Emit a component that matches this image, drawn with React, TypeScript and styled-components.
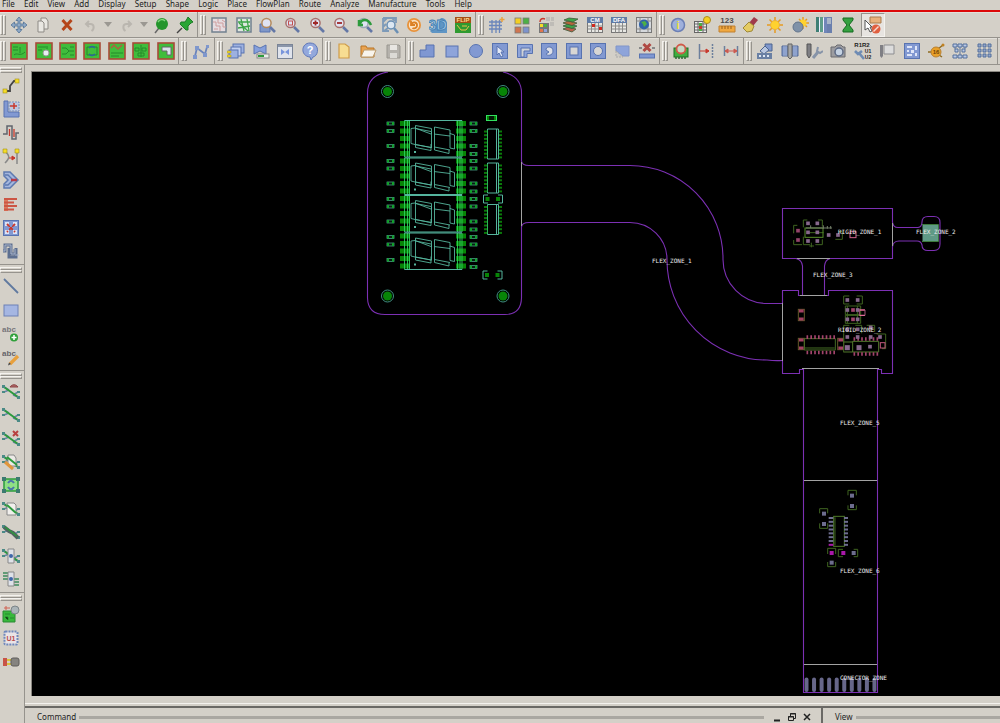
import React from "react";
import styled, { createGlobalStyle } from "styled-components";

const face = "#d4d0c8";
const dark = "#96938d";
const light = "#f4f2ee";
const uiFont = '"Noto Sans", "Open Sans", sans-serif';

const GlobalStyle = createGlobalStyle`
  * { box-sizing: border-box; }
  body { margin: 0; background: ${face}; font-family: ${uiFont}; color: #222; overflow: hidden; }
  button { font: inherit; color: inherit; }
`;

const AppFrame = styled.div`
  display: flex;
  flex-direction: column;
  min-height: 100vh;
  overflow: hidden;
`;

const MenuBar = styled.nav`
  height: 12px;
  border-bottom: 2px solid #dc0808;
`;

const MenuList = styled.div`
  display: flex;
  justify-content: space-between;
  max-width: 472px;
  padding-left: 2px;
`;

const MenuItem = styled.button`
  padding: 0;
  border: 0;
  background: none;
  font-size: 8px;
  line-height: 8px;
  white-space: nowrap;
`;

const ToolRow = styled.div`
  display: flex;
  height: 26px;
  margin-left: -2px;
  border-bottom: 1px solid ${dark};
  box-shadow: inset 0 1px 0 #e2dfd9;
  & + & { height: 27px; }
`;

const ToolGroup = styled.div<{ $width: number; $last?: boolean }>`
  display: flex;
  align-items: center;
  flex: none;
  width: ${(p) => p.$width}px;
  padding-left: 1px;
  border-right: ${(p) => (p.$last ? "0" : `1px solid ${dark}`)};
`;

const Handle = styled.span<{ $vertical?: boolean }>`
  flex: none;
  display: flex;
  flex-direction: ${(p) => (p.$vertical ? "column" : "row")};
  width: ${(p) => (p.$vertical ? "22px" : "6px")};
  height: ${(p) => (p.$vertical ? "6px" : "20px")};
  margin: ${(p) => (p.$vertical ? "2px 0 1px" : "0 1px 0 1px")};
  &::before,
  &::after {
    content: "";
    flex: 1;
    border: 1px solid;
    border-color: ${light} ${dark} ${dark} ${light};
  }
`;

const ToolButton = styled.button<{ $narrow?: boolean; $pressed?: boolean }>`
  display: flex;
  align-items: center;
  justify-content: center;
  flex: ${(p) => (p.$narrow ? 10 : 24)} 1 0;
  min-width: 0;
  min-height: 0;
  height: 24px;
  padding: 0;
  border: 1px solid transparent;
  background: none;
  ${(p) => p.$pressed && `background: #e7e4e0; border-color: ${dark} ${light} ${light} ${dark};`}
  svg { flex: none; display: block; }
`;

const Body = styled.div`
  display: flex;
  flex: 1;
`;

const SideBar = styled.aside`
  flex: none;
  width: 25px;
  border-right: 1px solid ${dark};
`;

const SideGroup = styled.div<{ $height: number; $last?: boolean }>`
  display: flex;
  flex-direction: column;
  height: ${(p) => p.$height}px;
  padding-bottom: 1px;
  border-bottom: ${(p) => (p.$last ? "0" : `1px solid ${dark}`)};
  ${ToolButton} { width: 22px; height: auto; }
`;

const Main = styled.main`
  flex: 1;
  min-width: 0;
  display: flex;
  flex-direction: column;
`;

const CanvasFrame = styled.section`
  flex: 1;
  display: flex;
  margin: 6px 0 7px 6px;
  border: 1px solid #8a8781;
  border-right: 0;
  border-bottom: 0;
  background: #000;
  svg { width: 100%; height: auto; display: block; }
`;

const DockRow = styled.div`
  display: flex;
  height: 20px;
  border-top: 1px solid ${light};
`;

const Dock = styled.section<{ $fixed?: number }>`
  display: flex;
  align-items: center;
  gap: 3px;
  flex: ${(p) => (p.$fixed ? `0 0 ${p.$fixed}px` : "1")};
  margin-top: 2px;
  padding: 3px 0 0 12px;
  border-top: 2px solid #6b6965;
  ${(p) => p.$fixed && "border-left: 2px solid #6b6965; padding-left: 12px;"}
`;

const DockTitle = styled.h2`
  margin: 0;
  font-size: 8px;
  line-height: 12px;
  font-weight: 400;
`;

const TitleRule = styled.span`
  flex: 1;
  height: 3px;
  background: #aaa7a1;
`;

const DockControls = styled.div`
  display: flex;
  gap: 3px;
  padding: 0 8px 0 4px;
`;

const DockButton = styled.button`
  width: 12px;
  height: 12px;
  padding: 0;
  border: 0;
  background: none;
  svg { display: block; }
`;

/* ---------- icons, drawn on an 18 x 18 grid ---------- */

const B = "#5873b0";
const L = "#9db1e0";
const G = "#2c9a3c";
const R = "#c8382c";
const Y = "#f5dc28";
const label = { fontFamily: '"Liberation Sans", sans-serif', fontWeight: 700, textAnchor: "middle" as const };

const board = (inner: React.ReactNode) => (
  <g fill="none" stroke="#258a2b">
    <rect x="1" y="1" width="16" height="16" fill="#40bd3c" stroke="#a84a38" strokeWidth="1.6" />
    {inner}
  </g>
);
const lens = (inner: React.ReactNode, ring = "#a8706c") => (
  <g fill="none">
    <path d="M11 11L16 16" stroke="#6377a6" strokeWidth="2.600" />
    <circle cx="7.5" cy="7" r="4.600" fill="#dfe3f2" stroke={ring} strokeWidth="1.5" />
    {inner}
  </g>
);
const tile = (inner: React.ReactNode) => (
  <g>
    <rect x="1.5" y="1.5" width="15" height="15" fill="#8299d2" stroke={B} />
    {inner}
  </g>
);
const rat = (inner?: React.ReactNode) => (
  <g fill="none">
    <path d="M2 4l5 3M2 9l5-2M11 12l5 2M11 12l5-3" stroke="#6a83a8" strokeWidth="1.5" />
    <path d="M2 4l14 10" stroke={G} strokeWidth="2" />
    <path d="M0 2h3v3H0zM0 8h3v2H0zM15 8h3v2h-3zM15 13h3v3h-3z" fill="#4a8a86" />
    {inner}
  </g>
);
const grid = (top: string, extra?: React.ReactNode) => (
  <g>
    <rect x="1.5" y="1.5" width="15" height="15" fill="#e8e8e4" stroke="#777" />
    <path d="M1.500 10h15M1.500 13h15M5.500 6v10.500M9 6v10.500M12.500 6v10.500" stroke="#8a8a88" />
    <rect x="1" y="1" width="16" height="6" fill="#5f7ba6" />
    <text x="9" y="6" fontSize="6" fill="#fff" {...label}>{top}</text>
    {extra}
  </g>
);

const icons: Record<string, React.ReactNode> = {
  Move: <path d="M9 1l3 3.500h-2V8h3.500V6L17 9l-3.500 3v-2H10v3.500h2L9 17l-3-3.500h2V10H4.500v2L1 9l3.500-3v2H8V4.500H6z" fill="#8fa9c6" stroke="#4f7196" strokeWidth=".8" />,
  Copy: <g fill="#e9e7e2" stroke="#8d8a85"><path d="M7 2h5l2 3v8H7z" /><path d="M4 5h4l2 2v9H4z" /></g>,
  Delete: <path d="M4.500 4l9 10M13.500 4l-9 10" stroke="#b5451a" strokeWidth="3" />,
  Undo: <path d="M7 5L4 8l3 3M4.500 8h4c4 0 4 5 1 7" fill="none" stroke="#bab6af" strokeWidth="2" />,
  Redo: <path d="M11 5l3 3-3 3M13.500 8h-4c-4 0-4 5-1 7" fill="none" stroke="#bab6af" strokeWidth="2" />,
  Unpin: <g><path d="M7 12l-4 5" stroke="#666" strokeWidth="1.500" /><circle cx="10" cy="8" r="6" fill="#24952c" /><path d="M6 6c2-3 5-3 7-1" stroke="#7fd67c" strokeWidth="1.500" fill="none" /></g>,
  Pin: <g><path d="M6 12l-5 5" stroke="#444" strokeWidth="1.500" /><path d="M12 1l5 5-2 1-3 3 0 4-2 0-6-6 1-2 4 0 2-3z" fill="#2aa534" stroke="#1c7c26" /></g>,
  "Unrats all": <g fill="none"><rect x="2" y="2" width="14" height="14" fill="#e5dce0" stroke="#70808f" strokeWidth="1.500" /><path d="M3 6h3v4h4v5M8 3v4h5v4h3M4 13h4M12 4l3 2" stroke="#cf9c9c" /></g>,
  "Rats all": <g fill="none"><rect x="2" y="2" width="14" height="14" fill="#dfe8e0" stroke="#70808f" strokeWidth="1.500" /><path d="M3 6h12M6 3l3 12M3 12l12-2M12 3l2 12M4 7l9 8" stroke="#3da548" strokeWidth="1.300" /></g>,
  "Zoom window": <g><path d="M1 8h10v8H1z" fill="#7f97c8" stroke={B} />{lens(null, "#b58a5c")}</g>,
  "Zoom box": lens(<rect x="5.500" y="5" width="4" height="4" stroke="#c25050" />),
  "Zoom in": lens(<path d="M5 7h5M7.500 4.500v5" stroke="#a02828" strokeWidth="1.800" />),
  "Zoom out": lens(<path d="M5 7h5" stroke="#a02828" strokeWidth="1.800" />),
  "Zoom previous": lens(<path d="M4 8c1-5 8-6 11 1M3 4v5h4" stroke={G} strokeWidth="2.500" />, "#9caab4"),
  "Zoom fit": <g fill="none"><path d="M2 2h13v5M2 2v13h6M2 6l4-4M2 11l3-3M11 2l3 3M3 15l4-3" stroke="#7d9ab8" strokeWidth="1.800" /><circle cx="10" cy="9" r="4" fill="#dce7f2" stroke="#6a8fb4" strokeWidth="1.500" /><path d="M13 12l4 5" stroke="#6a8fb4" strokeWidth="2.500" /></g>,
  Refresh: <g><circle cx="9" cy="9" r="7" fill="#e8923a" /><circle cx="9" cy="9" r="5.200" fill="#f9e2c4" /><path d="M6 5v4h4M6.500 9c1-4 6-3 5.500 1-.5 2-3 3-4.500 2" fill="none" stroke="#dc8024" strokeWidth="1.800" /></g>,
  "3D view": <g><path d="M12 2c5 0 7 3 6 15H3l-2-2z" fill="#5f95c4" /><text x="8.500" y="14" fontSize="15" fill="#9cc3e2" stroke="#3f7cb0" strokeWidth=".8" {...label}>3D</text></g>,
  Flip: <g><rect x="1" y="1" width="16" height="16" fill="#2f9a30" /><rect x="1" y="1" width="16" height="6" fill="#a55014" /><text x="9" y="6" fontSize="6" fill="#ffd890" {...label}>FLIP</text><path d="M3 9l4 5h5l3-4M8 10h5" stroke="#e9c14c" fill="none" /></g>,
  "Grid toggle": <g fill="none"><path d="M1 6h13M1 9.500h13M1 13h13M4 4v13M8 4v13M11.500 4v13" stroke="#6b86bb" strokeWidth="1.300" /><path d="M14 1v5M11.500 3.500h5" stroke="#e9a240" strokeWidth="1.500" /></g>,
  "Color dialog": <g stroke="#7a7a78" strokeWidth=".8"><rect x="2" y="2" width="6" height="6" fill="#f3cf23" /><rect x="10" y="2" width="6" height="6" fill="#4caf45" /><rect x="2" y="11" width="6" height="6" fill="#cf7550" /><rect x="10" y="11" width="6" height="6" fill="#7d93cc" /></g>,
  "Color priority": <g><path d="M9 1h4v4H9zM14 1h3v4h-3zM13 6h4v4h-4z" fill="#bfbcb7" /><rect x="2" y="7" width="10" height="10" fill="#777" /><path d="M3 8h3v3H3z" fill={Y} /><path d="M7 8h3v3H7z" fill="#4caf45" /><path d="M3 13h3v3H3z" fill="#df7550" /><path d="M7 13h3v3H7z" fill="#90a3da" /><path d="M3 6c0-3 2-4 5-3" stroke={R} strokeWidth="1.500" fill="none" /></g>,
  Layers: <g stroke="#3c5a38" strokeWidth=".8"><path d="M2 13l5-2 8 2-4 3z" fill="#b9604a" /><path d="M2 10l5-2 9 2-5 2.500z" fill="#3da548" /><path d="M2 7l5-2 9 2-5 2.500z" fill="#b7663c" /><path d="M3 4l5-2 9 1-5 3z" fill="#3da548" /></g>,
  "Constraint manager": grid("CM", <path d="M6 8h3v3H6zM13 11h3v3h-3z" fill="#d02a20" />),
  "Constraint columns": grid("DFA"),
  "Net globe": <g><rect x="1.500" y="1.500" width="15" height="15" fill="#d5d8dc" stroke="#777" /><path d="M1.500 5h15M1.500 13h15M5 1.500v15M13 1.500v15" stroke="#8a8a88" /><circle cx="9" cy="8.500" r="5" fill="#2f62a8" /><path d="M6 6l4-1 2 3-3 3-1-3z" fill="#4caf45" /></g>,
  Info: <g><circle cx="9" cy="9" r="6.500" fill="#9fb0dc" stroke="#6b7fb5" strokeWidth="1.500" /><text x="9" y="13" fontSize="11" fill="#f3e13a" {...label}>i</text></g>,
  "Property list": <g><rect x="1.500" y="5.500" width="12" height="11" fill="#eee" stroke="#666" /><path d="M1.500 8h12M1.500 11h12M1.500 14h12M5 5v11M10 5v11" stroke="#666" /><path d="M6 7h3v8H6z" fill="#4caf45" /><path d="M6 10h3v3H6z" fill={R} /><circle cx="14" cy="4" r="3.500" fill="#f3cf23" stroke="#ad8a1c" /></g>,
  Measure: <g><text x="9" y="7" fontSize="8" fill="#4b4b4b" {...label}>123</text><path d="M1 10h16v6H1z" fill="#f0a840" stroke="#c08030" /><path d="M4 10v3M7 10v3M10 10v3M13 10v3" stroke="#9c6018" /></g>,
  Highlight: <g><path d="M12 1l4 3-5 6-4-3z" fill="#a03a4c" /><path d="M7 6l5 4-2 5-5 1-4-4z" fill="#e4cb62" stroke="#9f8836" /></g>,
  "Sun on": <g><path d="M9 1v16M1 9h16M3.500 3.500l11 11M14.500 3.500l-11 11" stroke="#e69a20" strokeWidth="1.500" /><circle cx="9" cy="9" r="4.500" fill="#ffd22e" stroke="#e9b040" /></g>,
  "Shadow mode": <g><path d="M12 1v12M6 7h12M8 3l8 8M16 3l-8 8" stroke="#e69a20" strokeWidth="1.500" /><circle cx="12" cy="7" r="3.500" fill="#ffd22e" /><circle cx="7" cy="11" r="5" fill="#7f91a8" stroke="#62748c" /></g>,
  "Layer stripes": <g><path d="M1 1h3v15H1z" fill="#3e7f74" /><path d="M5 1h3v15H5z" fill="#5e9d8a" /><path d="M9 1h3v16H9z" fill="#7186b8" /><path d="M12 1h5v16h-5z" fill="#6a7fae" /><path d="M4.500 2v14M8.500 2v14" stroke="#eef" /><path d="M12 2h4v6h-4z" fill="#a9b5c8" /></g>,
  Hourglass: <path d="M4 2h10v2l-4 5 4 5v2H4v-2l4-5-4-5z" fill="#35a040" stroke="#156a20" />,
  "Pick exclusion": <g><path d="M6 1h11v6H6z" fill="#e8b27c" stroke="#a97c4e" /><circle cx="12" cy="13" r="4.500" fill="#e06040" /><path d="M9.500 15.500l5-5" stroke="#f8d8d0" strokeWidth="1.500" /><path d="M1 4v10l3-2 2 4 2-1-2-4h2z" fill="#fff" stroke="#555" /></g>,
  "Board etch": board(<path d="M3 5h5M3 8h5M10 5v6M4 13c3-3 6 2 11-3" />),
  "Board via": board(<g><path d="M3 5h8M3 8h4M12 4v3" /><circle cx="11" cy="11" r="3" fill="#e8eef0" stroke="#999" /></g>),
  "Board routes": board(<path d="M3 6h4l3 3h5M3 12h4l3-3M11 5h4M11 13h4" />),
  "Board swap": board(<g><path d="M4 5h10v8H4z" /><path d="M6 6c2-2 4-2 6 0M6 12c2 2 4 2 6 0" stroke="#2f62a0" strokeWidth="1.500" /></g>),
  "Board signal": board(<g><path d="M3 6l3-3 4 4 4-4" stroke="#b06040" strokeWidth="1.500" /><path d="M3 11h12M3 14h8" /></g>),
  "Board parts": board(<path d="M3 6h4v3H3zM10 6h4v3h-4zM6 11h6v3H6zM9 3v12" />),
  "Board shape": board(<path d="M5 5h9v8h-4V9H5z" fill="#dce2ec" stroke="#666" />),
  Netlist: <g><path d="M3 14L5 6l8 6 2-7" fill="none" stroke="#6a84bc" strokeWidth="1.800" /><path d="M1 13h4v4H1zM3 4h4v4H3zM11 11h4v4h-4zM14 3h3v3h-3z" fill="#7f97cc" /></g>,
  "Window stack": <g stroke={B}><rect x="6" y="2" width="11" height="9" fill={L} /><rect x="4" y="5" width="10" height="9" fill="#c3d0f0" /><rect x="2" y="8" width="9" height="8" fill={L} /><path d="M0 9h4v2H0zM0 13h4v2H0z" fill={Y} stroke="#a08818" strokeWidth=".5" /></g>,
  "Link windows": <g><path d="M2 3l6 3 6-3v9l-6-3-6 3z" fill="#86a0dc" stroke={B} /><rect x="5" y="12" width="12" height="4" fill="#e8eee8" stroke="#888" /><path d="M6 14h6" stroke={G} strokeWidth="2" /></g>,
  "Window link": <g><rect x="1.500" y="2.500" width="15" height="14" fill="#dfe3ec" stroke="#7a8496" /><path d="M2 3h14v2H2z" fill="#8b96aa" /><path d="M5 7l4 3 4-3v6l-4-3-4 3z" fill="#7895dc" /></g>,
  Help: <g><path d="M9 1c10 0 9 13 3 14l-2 3-1-3C-1 14 0 1 9 1z" fill="#93a8dc" stroke="#5f78b8" /><text x="9" y="12" fontSize="11" fill="#fff" {...label}>?</text></g>,
  New: <path d="M4 2h6l4 3v11H4z" fill="#f7dd92" stroke="#cf9c48" strokeWidth="1.200" />,
  Open: <g><path d="M2 4h5l1 2h7v9H2z" fill="#eaa350" stroke="#b97524" /><path d="M5 8h12l-3 7H2z" fill="#f8f4ec" stroke="#b9996a" /></g>,
  Save: <g><path d="M3 3h12l1 1v12H3z" fill="#b5b2ac" stroke="#99968f" /><path d="M6 3h7v5H6z" fill="#e8e6e2" /><path d="M6 11h7v5H6z" fill="#dcdad5" /></g>,
  "Add polygon": <path d="M2 8h6V3h8v12H2z" fill="#7f97d2" stroke={B} />,
  "Add rectangle": <rect x="3" y="4" width="12" height="11" fill="#8ea4da" stroke={B} />,
  "Add circle": <circle cx="9" cy="9" r="6.500" fill="#8299d2" stroke={B} />,
  "Select shape": tile(<path d="M6 4v9l2-2 2 4 2-1-2-4h3z" fill="#e4e9f6" stroke={B} />),
  "Void polygon": <g><path d="M1.500 2.500h15v9H11v4H1.500z" fill="#8ea4da" stroke={B} /><path d="M5 15V6h9v3H8v6z" fill="#cfd2d8" stroke={B} /></g>,
  "Void ring": tile(<path d="M6 7c1-3 7-3 7 2s-6 5-7 3l3-2-3-2z" fill="#dcdfe8" stroke={B} />),
  "Void rectangle": tile(<rect x="5" y="5" width="8" height="8" fill="#d8d6d4" stroke={B} />),
  "Void circle": tile(<circle cx="9" cy="9" r="4.500" fill="#d8d6d4" stroke={B} />),
  "Edit void": <g><path d="M3 4h13v10h-6L3 9z" fill="#8ea4da" stroke="#8095c8" /><path d="M3 9v6h7z" fill="#cdcac4" stroke="#aaa" strokeDasharray="2 1" /></g>,
  "Delete island": <g><path d="M5.500 2l7 7M12.500 2l-7 7" stroke="#b04a44" strokeWidth="3" /><path d="M1 6h3M14 6h3" stroke="#888" strokeWidth="2" /><rect x="1.500" y="12" width="15" height="4" fill="#7f97d2" stroke={B} /></g>,
  "Board probe": <g><rect x="2" y="6" width="14" height="9" fill="#3fae40" stroke="#1f6f25" /><path d="M3 16h12" stroke="#2c6a30" strokeDasharray="2 1" strokeWidth="1.500" /><circle cx="9" cy="7" r="4.500" fill="#c9d8c4" stroke="#d05848" strokeWidth="1.800" /></g>,
  "Dimension edge": <g><path d="M2.500 2v15" stroke="#6c7f9c" strokeWidth="1.500" /><path d="M15.500 2v15" stroke="#6c7f9c" strokeDasharray="2 1" strokeWidth="1.500" /><path d="M3 9h9M9 7l3 2-3 2z" stroke={R} fill={R} /></g>,
  "Dimension span": <g><path d="M2.500 4v10M15.500 4v10" stroke="#6c7f9c" strokeWidth="1.500" /><path d="M3 9h12M6 7L3 9l3 2zM12 7l3 2-3 2z" stroke="#cc5a50" fill="#cc5a50" /></g>,
  "Place part": <g><path d="M9 2h7v7h-6z" fill="#7f97cc" stroke="#4d648f" /><path d="M4 9l5-5 4 4-5 4z" fill="#b9c7e0" stroke="#4d648f" /><rect x="1" y="11" width="15" height="6" fill="#6a80a4" /><path d="M3 13h2v2H3zM7 13h2v2H7zM11 13h2v2h-2z" fill="#dde6f2" /></g>,
  "Mirror part": <g><path d="M1 4h6v10H1zM11 4h6v10h-6z" fill="#7f95c4" stroke="#546a98" /><path d="M3 4v10M5 4v10M13 4v10M15 4v10" stroke="#9fb0d6" /><path d="M7 2h4v13l-2 2-2-2z" fill="#a7a7a5" stroke="#666" /></g>,
  "Part wrench": <g><path d="M2 2h4v11l-2 3-2-3z" fill="#7f7f84" stroke="#555" /><path d="M8 16l5-6" stroke="#8794a8" strokeWidth="3" /><path d="M13 5l-1 4 3 2 3-2" fill="none" stroke="#8794a8" strokeWidth="2" /></g>,
  Snapshot: <g><path d="M2 5h4l2-2h4l2 2h2v10H2z" fill="#9c9ca0" stroke="#6a6a6e" /><circle cx="10" cy="10" r="4" fill="#c5d2e2" stroke="#5d6a84" strokeWidth="1.500" /></g>,
  "Rename refdes": <g><text x="8" y="5" fontSize="6" fill="#222" {...label}>R1R2</text><text x="14" y="11" fontSize="5" fill="#222" {...label}>U1</text><text x="14" y="17" fontSize="5" fill="#222" {...label}>U2</text><path d="M1 9l3 3 4-3M5 11l5 6" fill="none" stroke="#6f8cb4" strokeWidth="2.600" /></g>,
  "Part note": <g><path d="M2 3h3v11l-1.500 2L2 14z" fill="#7f7f84" /><path d="M6 3h10v9H6z" fill="#dcdcdc" stroke="#8d8d90" /></g>,
  "Pin map": tile(<path d="M4 4h5v2H4zM12 4h2v4h-2zM4 8h2v2H4zM8 8h3v3H8zM4 12h5v2H4zM12 11h2v3h-2z" fill="#dfe6f8" />),
  "Net probe": <g><path d="M1 10h7M11 7l5-4M12 13l3 2" stroke="#8f6b20" strokeWidth="1.500" /><circle cx="9" cy="10" r="5" fill="#e9a028" stroke="#b88030" /><circle cx="16" cy="3" r="1.500" fill="#c08020" /><text x="9" y="12" fontSize="6" fill="#6f4508" {...label}>16</text></g>,
  "Pad array": <path d="M2 2h4v3H2zM7 2h4v3H7zM12 2h4v3h-4zM4 7h3v3H4zM11 7h3v3h-3zM2 13h4v3H2zM7 13h4v3H7zM12 13h4v3h-4zM9 5v8M4 5v2M14 5v2" fill="#b9c8e6" stroke="#54709c" />,
  "Pad grid": <path d="M2 2h3v3H2zM7 2h3v3H7zM12 2h3v3h-3zM2 7h3v3H2zM7 7h3v3H7zM12 7h3v3h-3zM2 12h3v3H2zM7 12h3v3H7zM12 12h3v3h-3z" fill="#93a6cc" stroke="#54709c" />,
  "Add connect": <g><path d="M4 14h4V9l4-5h3" fill="none" stroke="#444" strokeWidth="1.800" /><rect x="1" y="12" width="4" height="4" fill={Y} stroke="#a09018" strokeWidth=".6" /><rect x="13" y="2" width="4" height="4" fill={Y} stroke="#a09018" strokeWidth=".6" /></g>,
  Slide: <g><path d="M2 1h4v11h11v5H2z" fill="#8299d2" stroke={B} /><path d="M7 2h10v9H7z" fill="#bcc8e0" stroke="#7b90bc" strokeDasharray="2 1" /><path d="M8 6h7M12 3v6" stroke={R} strokeWidth="1.500" /></g>,
  "Delay tune": <g fill="none"><path d="M1 10h4V2h5v13h4V9h3" stroke="#60646c" strokeWidth="1.500" /><path d="M7.500 12V5M12 5v8" stroke={R} strokeWidth="1.300" /></g>,
  "Custom smooth": <g><path d="M3 3c5 5 5 7 0 12M15 3v13" fill="none" stroke="#888" strokeWidth="1.500" /><path d="M7 10h6M10 8l3 2-3 2z" stroke={R} fill={R} /><path d="M1 1h4v4H1zM13 1h4v4h-4z" fill={Y} stroke="#a09018" strokeWidth=".6" /></g>,
  Vertex: <g><path d="M2 1h6l8 8-8 8H2v-4l4-4-4-4z" fill="#a4b6dd" stroke="#5d79b0" strokeWidth="1.500" /><path d="M3 4h3l5 5-5 5H3" fill="none" stroke="#5d79b0" strokeWidth="1.300" /><path d="M9 9h6" stroke="#b83a48" strokeWidth="2.500" /></g>,
  "Auto route": <g><path d="M2 3h4v13H2z" fill="#dc7c60" /><path d="M2 4h13M2 7.500h10M2 11h13M2 14.500h10" stroke="#cc5644" strokeWidth="2.200" /></g>,
  Fanout: tile(<g><path d="M4 4l10 10M14 4L4 14" stroke={R} /><path d="M3 3h4v4H3zM11 3h4v4h-4zM3 11h4v4H3zM11 11h4v4h-4z" fill="#dce3f6" /><path d="M5 5l8 8M13 5l-8 8" stroke={R} strokeDasharray="3 2" strokeWidth="2" /></g>),
  Meander: <g fill="none"><path d="M1 9h2V3h6v9h4V7" stroke="#5d6f90" strokeWidth="3" /><path d="M7 6v9h7V6" stroke="#5d6f90" strokeWidth="3" /><path d="M1 9h2V3h6v9h4V7M13 13h4" stroke="#aab6cc" strokeWidth="1" /></g>,
  "Add line": <path d="M2 2l14 14" stroke="#60799f" strokeWidth="1.800" />,
  "Add filled rectangle": <rect x="2" y="4" width="14" height="11" fill="#a5b6e2" stroke="#6c80b5" />,
  "Add text": <g><text x="7" y="8" fontSize="8" fill="#77757a" {...label}>abc</text><circle cx="12" cy="13.500" r="4" fill="#2fa03a" /><path d="M9.500 13.500h5M12 11v5" stroke="#fff" strokeWidth="1.500" /></g>,
  "Edit text": <g><text x="7" y="8" fontSize="8" fill="#66646a" {...label}>abc</text><path d="M8 16l8-8" stroke="#e8a03c" strokeWidth="3.200" /><path d="M6 17.500l1-3 2 1.500z" fill="#444" /></g>,
  "Net schedule": rat(<path d="M8 4c2-3 6-3 8 0z" fill="#b06868" stroke="#8d4444" />),
  "Net logic": rat(),
  "Delete net": rat(<path d="M11 1l5 5M16 1l-5 5" stroke="#b84040" strokeWidth="2" />),
  "Edit net": rat(<g><path d="M6 2h6l2 3v8H6z" fill="#eceae6" stroke="#888" /><path d="M5 4l10 8" stroke={G} strokeWidth="2" /><path d="M3 9l8 7" stroke="#e0963c" strokeWidth="3" /></g>),
  "Swap nets": <g><path d="M2 3h14v12H2z" fill="#8fe084" stroke={G} strokeWidth="1.500" /><path d="M0 1h4v4H0zM14 1h4v4h-4zM0 13h4v4H0zM14 13h4v4h-4z" fill="#3c7a70" /><path d="M6 7c2-3 4-3 6 0M6 11c2 3 4 3 6 0" fill="none" stroke="#4c74ac" strokeWidth="2" /></g>,
  "Net document": <g>{rat()}<path d="M5 3h7l2 2v10H5z" fill="#f1efec" stroke="#888" /><path d="M5 5l9 8" stroke={G} strokeWidth="2" /></g>,
  "Net thick": rat(<g><path d="M2 4l5 4 4 2 5 5" stroke="#4f6460" strokeWidth="4" /><path d="M3 4l12 9" stroke={G} strokeWidth="1.500" /></g>),
  "Net device": <g>{rat()}<path d="M6 2h6v14H6z" fill="#dfe2e8" stroke="#888" /><circle cx="9" cy="9" r="2" fill="#3f66a8" /></g>,
  "Net bus": <g><path d="M1 3h5M1 6h5M1 9h5M12 9h5M12 12h5M12 15h5" stroke="#3c8a5c" strokeWidth="1.600" /><path d="M6 2h6v14H6z" fill="#dfe2e8" stroke="#888" /><circle cx="9" cy="9" r="2" fill="#3f66a8" /></g>,
  "Place manual": <g><path d="M1 6h12v11H1z" fill="#38b83c" stroke="#2a8a32" /><path d="M3 9h5M3 12h3v3M8 13h4" stroke="#248a2c" /><circle cx="13" cy="5" r="4" fill="#aab4b8" stroke="#7b8488" /><path d="M2 3h6M4 1v4" stroke="#d06050" /></g>,
  "Place component": <g><rect x="2.500" y="2.500" width="13" height="13" rx="1" fill="#e9e3e6" stroke="#6f88bc" strokeWidth="2" strokeDasharray="2 1" /><text x="9" y="12" fontSize="7" fill="#b84a4a" {...label}>U1</text></g>,
  Connector: <g><path d="M1 5h4v8H1z" fill="#c85448" /><path d="M5 7h4M5 11h4" stroke="#d8c240" strokeWidth="2" /><rect x="9" y="5" width="8" height="8" rx="2" fill="#85837f" stroke="#5f5d5a" /></g>,
};

type ToolName = string;

function Tool({ name, pressed }: { name: ToolName; pressed?: boolean }) {
  if (name.endsWith("options")) {
    return (
      <ToolButton $narrow aria-label={name}>
        <svg width="8" height="5" viewBox="0 0 8 5"><path d="M0 0h8L4 5z" fill="#9b9892" /></svg>
      </ToolButton>
    );
  }
  return (
    <ToolButton $pressed={pressed} aria-label={name}>
      <svg width="18" height="18" viewBox="0 0 18 18">{icons[name]}</svg>
    </ToolButton>
  );
}

const menus = ["File", "Edit", "View", "Add", "Display", "Setup", "Shape", "Logic", "Place", "FlowPlan", "Route", "Analyze", "Manufacture", "Tools", "Help"];

const rows: { width: number; tools: ToolName[] }[][] = [
  [
    { width: 200, tools: ["Move", "Copy", "Delete", "Undo", "Undo options", "Redo", "Redo options", "Unpin", "Pin"] },
    { width: 278, tools: ["Unrats all", "Rats all", "Zoom window", "Zoom box", "Zoom in", "Zoom out", "Zoom previous", "Zoom fit", "Refresh", "3D view", "Flip"] },
    { width: 181, tools: ["Grid toggle", "Color dialog", "Color priority", "Layers", "Constraint manager", "Constraint columns", "Net globe"] },
    { width: 228, tools: ["Info", "Property list", "Measure", "Highlight", "Sun on", "Shadow mode", "Layer stripes", "Hourglass", "Pick exclusion"] },
  ],
  [
    { width: 181, tools: ["Board etch", "Board via", "Board routes", "Board swap", "Board signal", "Board parts", "Board shape"] },
    { width: 36, tools: ["Netlist"] },
    { width: 108, tools: ["Window stack", "Link windows", "Window link", "Help"] },
    { width: 83, tools: ["New", "Open", "Save"] },
    { width: 254, tools: ["Add polygon", "Add rectangle", "Add circle", "Select shape", "Void polygon", "Void ring", "Void rectangle", "Void circle", "Edit void", "Delete island"] },
    { width: 84, tools: ["Board probe", "Dimension edge", "Dimension span"] },
    { width: 254, tools: ["Place part", "Mirror part", "Part wrench", "Snapshot", "Rename refdes", "Part note", "Pin map", "Net probe", "Pad array", "Pad grid"] },
  ],
];

const sideGroups: { height: number; tools: ToolName[] }[] = [
  { height: 200, tools: ["Add connect", "Slide", "Delay tune", "Custom smooth", "Vertex", "Auto route", "Fanout", "Meander"] },
  { height: 106, tools: ["Add line", "Add filled rectangle", "Add text", "Edit text"] },
  { height: 222, tools: ["Net schedule", "Net logic", "Delete net", "Edit net", "Swap nets", "Net document", "Net thick", "Net device", "Net bus"] },
  { height: 82, tools: ["Place manual", "Place component", "Connector"] },
];

/* ---------- board drawing ---------- */

const purple = "#7c30b4";
const seam = "#a3a3a3";
const teal = "#55b49c";
const pad = "#078507";
const olive = "#3f6420";

const range = (n: number) => Array.from({ length: n }, (_, i) => i);

function Square({ x, y, s = 11, fill }: { x: number; y: number; s?: number; fill: string }) {
  return <rect x={x - s / 2} y={y - s / 2} width={s} height={s} fill={fill} />;
}

function DigitDisplay({ y }: { y: number }) {
  return (
    <g transform={`translate(0 ${y})`} fill="none" stroke={teal} strokeWidth=".9">
      {range(5).map((i) => (
        <g key={i} fill={pad} stroke="none">
          <rect x="400" y={1 + i * 7.5} width="10" height="5" />
          <rect x="456" y={1 + i * 7.5} width="10" height="5" />
        </g>
      ))}
      <path d="M404.500 .5V37M462 .5V37M407.500 .5V37M409.500 .5V37M457.500 .5V37M460 .5V37" stroke="#2fd060" />
      <path d="M404.500 .5H462M404.500 37H462" stroke="#5fc8b0" />
      <path d="M415.500 5.500L431.500 8.500V14M415.500 5.500V27.500L431 30.500V24M411 8.500L415 8L431 14M411 8.500V23.500L415 24.500L431 27.500M431.500 12V28M415.500 8.500L431 11.500M415.500 24.500L431 27.500" />
      <path d="M434.500 7L450 10V14M434.500 7V30L449 33.500V30M434 14L450 16M450 13.500L454.500 15V29L450 28V13.500M434.500 27L450 30" />
      <rect x="414" y="31" width="2" height="2" fill={teal} stroke="none" />
    </g>
  );
}

function Chip({ y, h }: { y: number; h: number }) {
  return (
    <g>
      {range(8).map((i) => (
        <g key={i} fill="#0a7a0a">
          <rect x="484" y={y + 1.5 + i * 3.7} width="3" height="2" />
          <rect x="499" y={y + 1.5 + i * 3.7} width="3" height="2" />
        </g>
      ))}
      <path d={`M487.500 ${y}V${y + h}H498.500V${y}zM496.500 ${y}V${y + h}`} fill="none" stroke={teal} />
      <path d={`M487.500 ${y + 1}V${y + h - 1}`} stroke="#2fb05a" />
    </g>
  );
}

function SmallPart({ x, y }: { x: number; y: number }) {
  return (
    <g>
      <rect x={x - 3.5} y={y - 1.5} width="7" height="3" fill="#06210e" stroke={teal} strokeWidth=".7" />
      <rect x={x - 3.5} y={y - 1.5} width="2" height="3" fill="#12a02c" />
      <rect x={x + 1.5} y={y - 1.5} width="2" height="3" fill="#12a02c" />
    </g>
  );
}

function WidePart({ x, y }: { x: number; y: number }) {
  return (
    <g>
      <path d={`M${x - 5} ${y - 4}H${x - 9.5}V${y + 4}H${x - 5}M${x + 5} ${y - 4}H${x + 9.5}V${y + 4}H${x + 5}`} fill="none" stroke={teal} />
      <Square x={x - 5.5} y={y} s={4} fill={pad} />
      <Square x={x + 5} y={y} s={4} fill={pad} />
    </g>
  );
}

const zoneLabels: [string, number, number][] = [
  ["FLEX_ZONE_1", 652, 263],
  ["RIGID_ZONE_1", 838, 234],
  ["FLEX_ZONE_2", 916, 234],
  ["FLEX_ZONE_3", 813, 277],
  ["RIGID_ZONE_2", 838, 332],
  ["FLEX_ZONE_5", 840, 425],
  ["FLEX_ZONE_6", 840, 573],
  ["CONECTOR_ZONE", 840, 680],
];

const leftParts = [123.5, 131, 146, 161, 168.5, 183.5, 199, 206.5, 221.5, 237, 244.5, 260];
const rightParts = [123.5, 131, 146, 154, 161, 168.5, 183.5, 191.5, 199, 206.5, 221.5, 229.5, 237, 244.5, 260, 267];

function BoardDrawing() {
  return (
    <svg viewBox="32 72 968 624" preserveAspectRatio="xMinYMin meet" role="img" aria-label="Board layout">
      <g fill="none" stroke={purple} strokeWidth="1.100">
        <path d="M388 72C375 74 367.500 81 367.500 93V298Q368 314.500 385 314.500H505Q521 314.500 521.500 298V226M503 72C516 75 521.500 82 521.500 93V161Q522 165.500 529 165.500H630A93 93 0 0 1 723 259A44 44 0 0 0 767 303.500H782" />
        <path d="M521.500 227Q522 222.500 529 222.500H630A37 37 0 0 1 667 259A100 100 0 0 0 767 360Q775 361 782 360.500" />
        <path d="M892.500 222V208.500H782.500V258.500H892.500V246M892.500 222Q893 227.500 898 227.500H918Q922 227 922 222Q922 216.500 928 216.500H934Q940 216.500 940 222.500V244Q940 250.500 934 250.500H928Q922 250.500 922 245Q921 241 917 241H899Q893 241 892.500 247" />
        <path d="M796 258.500Q802 260 802.500 266V295M830 258.500Q825 260 824.500 266V295" />
        <path d="M782.500 303V290.500H798.500V295.500H828.500V290.500H892.500V373.500H881.500V369.500H877.500V692.500H803.500V369.500H799.500V373.500H782.500V361" />
      </g>
      <path d="M521.500 162V226M782.500 303V361M892.500 223V246M797 258.500H830M800 295.500H827M802 368.500H879M804 480.500H877M804 664.500H877" stroke={seam} fill="none" />

      {[[387.5, 91.5], [503, 91.5], [387.5, 296], [503, 296]].map(([x, y]) => (
        <g key={`${x}-${y}`}>
          <circle cx={x} cy={y} r="6" fill="none" stroke="#3f8f80" />
          <circle cx={x} cy={y} r="4.500" fill={pad} />
        </g>
      ))}
      {range(4).map((i) => <DigitDisplay key={i} y={120 + i * 37.5} />)}
      {leftParts.map((y) => <SmallPart key={y} x={390.5} y={y} />)}
      {rightParts.map((y) => <SmallPart key={y} x={473.5} y={y} />)}
      <rect x="486.500" y="115.500" width="10" height="5" fill="#031a06" stroke="#32e060" />
      <path d="M487 118h2M494 118h2" stroke={pad} strokeWidth="4" />
      <Chip y={129} h={30} />
      <Chip y={163} h={30} />
      <Chip y={204.5} h={30} />
      <WidePart x={493} y={199} />
      <WidePart x={492.5} y={275} />

      <rect x="922.500" y="225" width="16" height="16" fill="#5f9a86" />
      <path d="M922 224.500H938.500V241.500H922" fill="none" stroke="#3c7a3c" />

      {/* rigid zones 1 and 2, drawn at triple size */}
      <g transform="translate(770 200) scale(.33333)" fill="none" strokeWidth="3">
        <path d="M112 60H100V82M144 60H157V80M82 76H71V100M71 120V134H96M100 110V134H120M136 134H157V118M196 118H217V94H206M124 128V142M118 138H132M118 98H161" stroke={olive} />
        <rect x="105" y="84" width="54" height="28" stroke="#558c28" />
        <path d="M108 84H186M122 76v8M160 76v10M172 78v8M182 78v8" stroke="#74806a" />
        {[[114, 70], [142, 70], [114, 97], [142, 97], [114, 123], [142, 123], [176, 105], [204, 105]].map(([x, y]) => <Square key={`${x}-${y}`} x={x} y={y} fill="#87688c" />)}
        <Square x={84} y={92} fill="#94446a" />
        <Square x={84} y={120} fill="#94446a" />
        <rect x="240" y="95" width="18" height="18" stroke="#d3648c" />

        {[[94, 345], [94, 432], [212, 432]].map(([x, y]) => (
          <g key={`${x}-${y}`}>
            <rect x={x - 9} y={y - 17} width="18" height="34" stroke="#66582c" />
            <path d={`M${x - 7} ${y - 12}h14M${x - 7} ${y + 12}h14`} stroke="#a34062" strokeWidth="9" />
          </g>
        ))}
        <path d="M103 416H196V450H103zM105 444H194" stroke="#456b24" />
        {range(8).map((i) => (
          <path key={i} d={`M${112 + i * 11.5} 406v11M${112 + i * 11.5} 452v11`} stroke="#a3446c" strokeWidth="5" />
        ))}
        <path d="M248 424H326V456H248zM220 426H248M220 456H248" stroke="#53792d" />
        {range(7).map((i) => (
          <path key={i} d={`M${253 + i * 11.5} 412v10M${253 + i * 11.5} 457v10`} stroke="#a3446c" strokeWidth="5" />
        ))}
        <path d="M238 288H221V312H238M260 288H277V312H260M226 318H272V344H226zM226 346H272V370H226zM238 376H221V400V456M256 376H275V400M290 376H314V396M320 402H347V446H336M232 318V370M262 318V370" stroke={olive} />
        {[[232, 300], [263, 300], [232, 330], [263, 330], [232, 358], [263, 358], [232, 388], [263, 388], [232, 411], [263, 411], [302, 411], [330, 411], [302, 382], [300, 440]].map(([x, y]) => <Square key={`${x}-${y}`} x={x} y={y} fill="#87688c" />)}
        <Square x={249} y={330} fill="#a3446c" />
        <Square x={249} y={358} fill="#a3446c" />
        <Square x={232} y={443} s={15} fill="#87688c" />
        <Square x={267} y={443} s={15} fill="#87688c" />
        <path d="M268 330h17M268 346h17" stroke="#e46c98" strokeWidth="4" />
        <path d="M268 330v16M285 330v16" stroke="#a05878" />
        <rect x="331" y="428" width="14" height="16" stroke="#c0587c" />
      </g>

      {/* parts in flex zone 6, drawn at triple size */}
      <g transform="translate(795 410) scale(.33333)" fill="none" strokeWidth="3">
        <path d="M159 256V241H184V256M159 286V299H184V286M74 310V296H98V310M74 340V355H98V340M98 432V415H122V432M98 456V470H122V456M144 418H130V440H144M176 418H188V440H176M120 322V406" stroke={olive} />
        <rect x="116" y="319" width="32" height="90" stroke="#4d7a26" />
        {range(8).map((i) => (
          <g key={i} strokeWidth="6">
            <path d={`M101 ${324 + i * 11.5}h14`} stroke={i === 7 ? "#a818a8" : "#6d6d8e"} />
            <path d={`M147 ${324 + i * 11.5}h12`} stroke="#6d6d8e" />
          </g>
        ))}
        {[[171, 257], [171, 288], [87, 311], [87, 342], [176, 429], [110, 458]].map(([x, y]) => <Square key={`${x}-${y}`} x={x} y={y} s={12} fill="#6d6d8e" />)}
        <Square x={110} y={429} s={12} fill="#a818a8" />
        <Square x={145} y={429} s={12} fill="#a818a8" />
      </g>

      {range(10).map((i) => (
        <rect key={i} x={804.5 + i * 7.55} y="677.500" width="4" height="14.500" rx="2" fill="#67678a" />
      ))}

      <g fill="#ececec" fontFamily='"DejaVu Sans Mono", "Liberation Mono", monospace' fontSize="6">
        {zoneLabels.map(([text, x, y]) => <text key={text} x={x} y={y}>{text}</text>)}
      </g>
    </svg>
  );
}

export default function App() {
  return (
    <AppFrame>
      <GlobalStyle />
      <MenuBar>
        <MenuList>
          {menus.map((m) => <MenuItem key={m}>{m}</MenuItem>)}
        </MenuList>
      </MenuBar>
      <div>
        {rows.map((groups, r) => (
          <ToolRow key={r}>
            {groups.map((g, i) => (
              <ToolGroup key={i} $width={g.width} $last={r === 0 && i === groups.length - 1}>
                <Handle />
                {g.tools.map((t) => <Tool key={t} name={t} pressed={t === "Pick exclusion"} />)}
              </ToolGroup>
            ))}
          </ToolRow>
        ))}
      </div>
      <Body>
        <SideBar>
          {sideGroups.map((g, i) => (
            <SideGroup key={i} $height={g.height} $last={i === sideGroups.length - 1}>
              <Handle $vertical />
              {g.tools.map((t) => <Tool key={t} name={t} />)}
            </SideGroup>
          ))}
        </SideBar>
        <Main>
          <CanvasFrame>
            <BoardDrawing />
          </CanvasFrame>
          <DockRow>
            <Dock>
              <DockTitle>Command</DockTitle>
              <TitleRule />
              <DockControls>
                <DockButton aria-label="Minimize"><svg width="12" height="12"><path d="M3 9.500h6" stroke="#222" strokeWidth="2" /></svg></DockButton>
                <DockButton aria-label="Restore"><svg width="12" height="12" fill="none" stroke="#222"><path d="M4.500 5V2.500h5v5H7.500M4 3h6" /><path d="M2.500 5.500h5v4h-5zM2 6h6" /></svg></DockButton>
                <DockButton aria-label="Close"><svg width="12" height="12"><path d="M3 3l6 6M9 3l-6 6" stroke="#222" strokeWidth="1.500" /></svg></DockButton>
              </DockControls>
            </Dock>
            <Dock $fixed={179}>
              <DockTitle>View</DockTitle>
              <TitleRule />
            </Dock>
          </DockRow>
        </Main>
      </Body>
    </AppFrame>
  );
}
